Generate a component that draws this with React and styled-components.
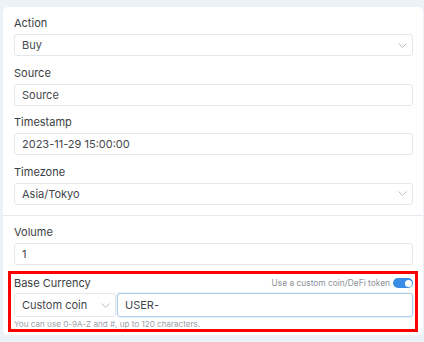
import React from 'react'
import styled, { createGlobalStyle } from 'styled-components'

const GlobalStyle = createGlobalStyle`
  body {
    margin: 0;
    background: #edf1f8;
    font-family: Inter, "Noto Sans", "Liberation Sans", sans-serif;
  }
`

const Page = styled.div`
  padding: 7px 1px 0 3px;
`

const Card = styled.div`
  background: #fff;
  border-radius: 5px;
  padding-bottom: 3px;
`

const Section = styled.div`
  padding: ${(p) => (p.$first ? '9px 10px 1px 11px' : '9px 10px 0 11px')};
  border-top: ${(p) => (p.$first ? 'none' : '1px solid #e6e9ee')};
`

const Field = styled.div`
  margin-bottom: ${(p) => p.$space ?? 9.5}px;
`

const Label = styled.div`
  font-size: 11px;
  line-height: 14px;
  color: #3a3d42;
  margin-bottom: ${(p) => p.$gap ?? 4}px;
`

const Input = styled.div`
  box-sizing: border-box;
  height: ${(p) => p.$h ?? 22}px;
  border: 1px solid ${(p) => (p.$focus ? '#aecbeb' : '#e4e7eb')};
  box-shadow: ${(p) => (p.$focus ? '0 0 0 1px rgba(120,170,230,0.15)' : 'none')};
  border-radius: 3px;
  padding: 0 5px 0 7px;
  display: flex;
  align-items: center;
  justify-content: space-between;
  font-size: 11px;
  color: #44474c;
  flex: ${(p) => (p.$grow ? 1 : 'none')};
  width: ${(p) => (p.$w ? p.$w + 'px' : 'auto')};
`

const Chevron = () => (
  <svg width="9" height="5" viewBox="0 0 9 5">
    <path d="M0.5 0.5 L4.5 4.3 L8.5 0.5" fill="none" stroke="#b9bdc3" strokeWidth="1" />
  </svg>
)

const Select = ({ value, ...rest }) => (
  <Input {...rest}>
    <span>{value}</span>
    <Chevron />
  </Input>
)

const Highlight = styled.div`
  border: 3px solid #f00;
  margin: 0 -5px 0 -6px;
  padding: 2px 2px 0 3px;
`

const HeadRow = styled.div`
  display: flex;
  justify-content: space-between;
  align-items: center;
  margin-bottom: 3px;
`

const ToggleWrap = styled.div`
  display: flex;
  align-items: center;
  gap: 3px;
  font-size: 8.4px;
  color: #8b9097;
`

const Toggle = styled.div`
  width: 20px;
  height: 10px;
  border-radius: 5px;
  background: #3a8de4;
  position: relative;
  &::after {
    content: '';
    position: absolute;
    right: 1.5px;
    top: 1.5px;
    width: 7px;
    height: 7px;
    border-radius: 50%;
    background: #fff;
  }
`

const Row = styled.div`
  display: flex;
  gap: 1px;
`

const Hint = styled.div`
  font-size: 8.1px;
  line-height: 10px;
  margin-top: 2px;
  color: #9ba0a7;
`

export default function App() {
  return (
    <>
      <GlobalStyle />
      <Page>
        <Card>
          <Section $first>
            <Field>
              <Label>Action</Label>
              <Select value="Buy" />
            </Field>
            <Field>
              <Label>Source</Label>
              <Input>Source</Input>
            </Field>
            <Field>
              <Label>Timestamp</Label>
              <Input>2023-11-29 15:00:00</Input>
            </Field>
            <Field>
              <Label>Timezone</Label>
              <Select value="Asia/Tokyo" />
            </Field>
          </Section>
          <Section>
            <Field $space={6}>
              <Label>Volume</Label>
              <Input>1</Input>
            </Field>
            <Highlight>
              <HeadRow>
                <Label $gap={0}>Base Currency</Label>
                <ToggleWrap>
                  Use a custom coin/DeFi token
                  <Toggle />
                </ToggleWrap>
              </HeadRow>
              <Row>
                <Select value="Custom coin" $w={102} $h={24} />
                <Input $grow $focus $h={24}>USER-</Input>
              </Row>
              <Hint>You can use 0-9A-Z and #, up to 120 characters.</Hint>
            </Highlight>
          </Section>
        </Card>
      </Page>
    </>
  )
}
